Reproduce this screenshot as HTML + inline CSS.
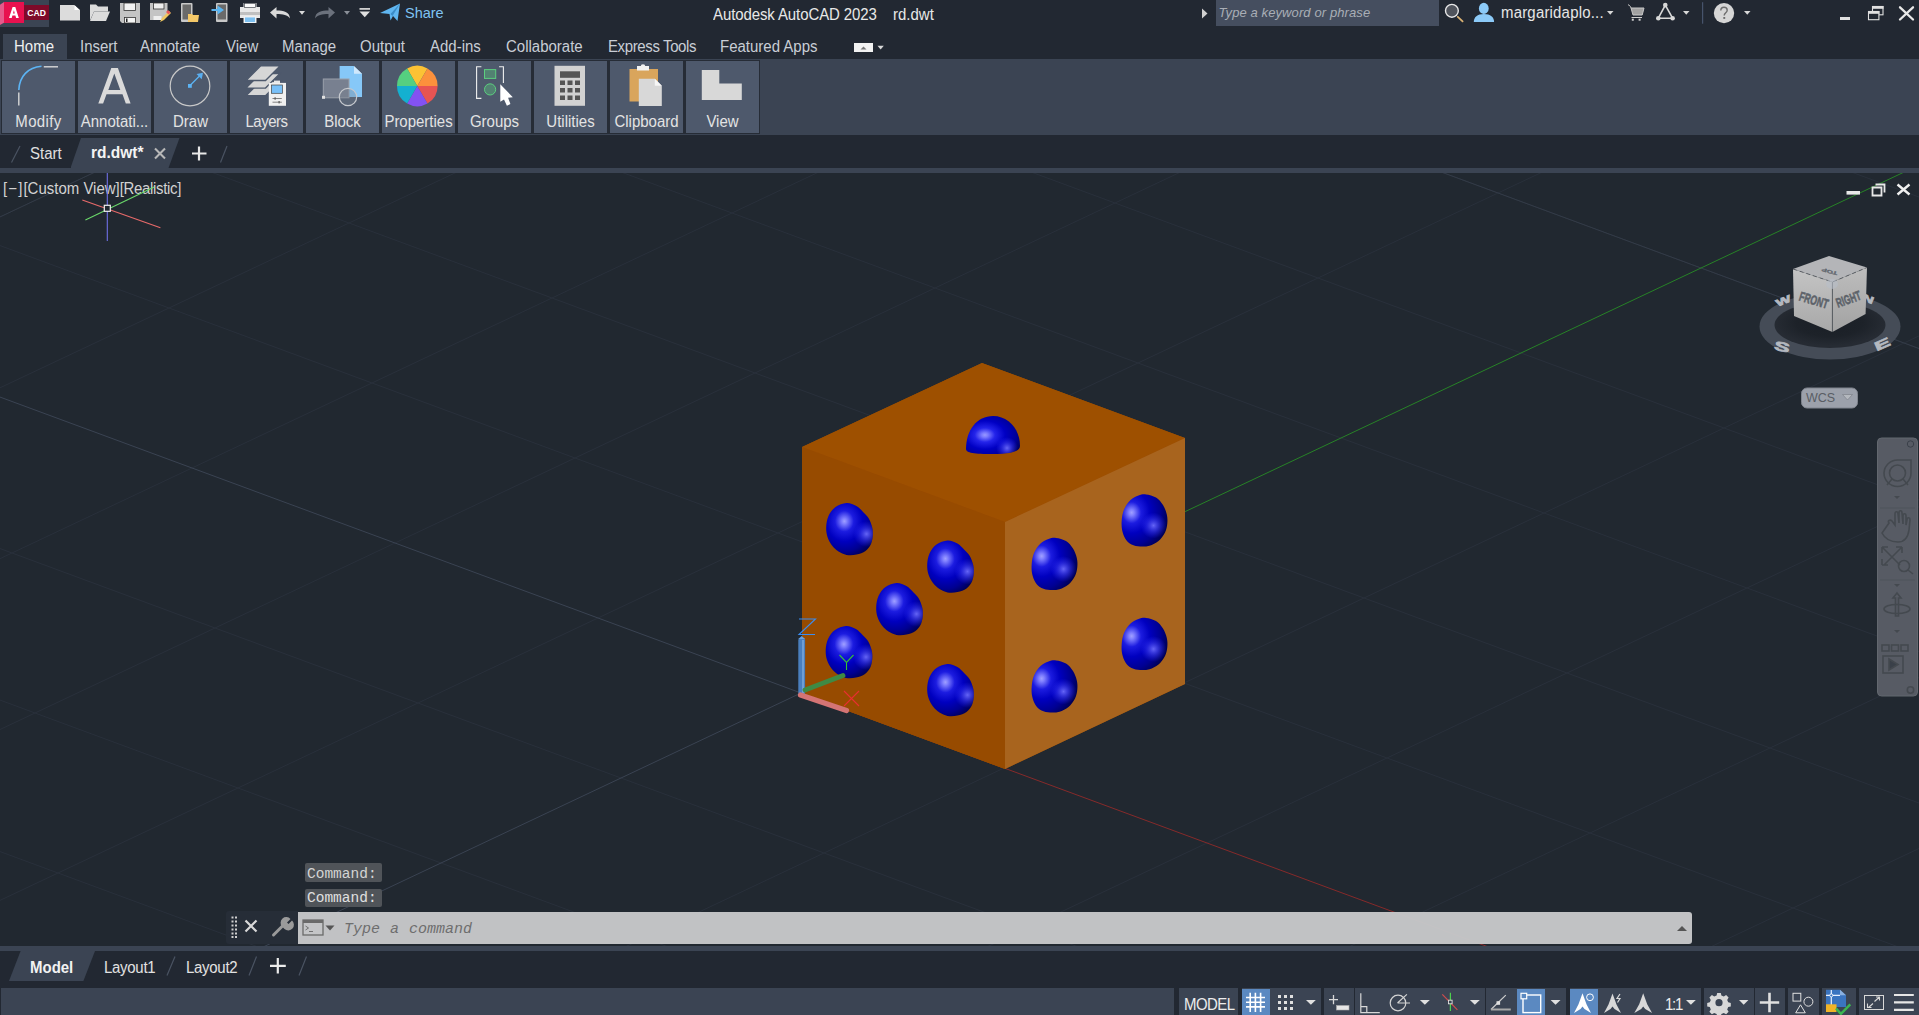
<!DOCTYPE html>
<html><head><meta charset="utf-8">
<style>
*{margin:0;padding:0;box-sizing:border-box}
html,body{width:1919px;height:1015px;overflow:hidden;background:#212830;font-family:"Liberation Sans",sans-serif;color:#e6e6e6}
.a{position:absolute}
.t{position:absolute;white-space:nowrap;line-height:1}
#title{left:0;top:0;width:1919px;height:30px;background:#222832}
#tabs{left:0;top:30px;width:1919px;height:29px;background:#222832}
#ribbon{left:0;top:59px;width:1919px;height:76px;background:#3b4453}
.rb{position:absolute;top:61px;width:73px;height:72px;background:#4e596c}
.rb .lb{position:absolute;left:0;width:73px;top:51.6px;text-align:center;font-size:16.05px;transform:scaleX(0.9346);color:#e3e3e3;line-height:1}
#ftabs{left:0;top:135px;width:1919px;height:33px;background:#222832}
#stripe1{left:0;top:168px;width:1919px;height:5px;background:#3b4453}
#vp{left:0;top:173px;width:1919px;height:773px;background:#212830;overflow:hidden}
#stripe2{left:0;top:946px;width:1919px;height:5px;background:#3b4453}
#ltabs{left:0;top:951px;width:1919px;height:37px;background:#222832}
#status{left:0;top:988px;width:1919px;height:27px;background:#222832}
</style></head><body>
<div id="title" class="a">
<!-- logo -->
<div class="a" style="left:0;top:0;width:49px;height:27px;background:#3b4453"></div>
<div class="a" style="left:0;top:2px;width:4px;height:23px;background:#e65a8c;clip-path:polygon(0 12%,100% 0,100% 90%,0 100%)"></div>
<div class="a" style="left:4px;top:2px;width:20px;height:21px;background:#e8114f"></div>
<div class="a" style="left:24px;top:5px;width:25px;height:15px;background:#7e0a29"></div>
<svg class="a" style="left:0;top:0" width="24" height="24"><path fill-rule="evenodd" d="M9 18.1L12.6 6.9H15.3L18.8 18.1H16.1L15.4 15.6H12.4L11.7 18.1ZM13 13.5H14.8L13.9 10.2Z" fill="#fff"/></svg>
<div class="t" style="left:27.3px;top:8.8px;font-size:8.6px;font-weight:bold;color:#fff;letter-spacing:0px">CAD</div>
<!-- QAT -->
<svg class="a" style="left:56px;top:0" width="350" height="28" viewBox="56 0 350 28">
<g fill="#dcdcdc">
<path d="M60 5h14l6 5v10.5H60z"/><path d="M74.5 5v5h5z" fill="#fff"/>
<path d="M90 4.5h6l2 2h10v5H94l-4 9z"/><path d="M94 11.5h16l-4 9.5H90z"/>
</g>
<path d="M120 3h20v20h-18l-2-2z" fill="#c4c4c4"/><rect x="124" y="3" width="11.5" height="7.5" fill="#f2f2f2" stroke="#333" stroke-width="0.8"/><rect x="124.5" y="17.5" width="11" height="5.5" fill="#f5f5f5" stroke="#333" stroke-width="0.8"/><rect x="126" y="18.5" width="1.5" height="3.5" fill="#222"/>
<path d="M150 3h17.5v12l-5 5H150z" fill="#c4c4c4"/><rect x="153.5" y="3" width="10.5" height="6" fill="#eee" stroke="#333" stroke-width="0.8"/><rect x="153.5" y="16" width="8" height="4" fill="#eee"/><path d="M160 22l2-4 7-7 2 2-7 7z" fill="#f0c860"/><path d="M166 12l2-2 2.5 2.5-2 2z" fill="#e85a5a"/>
<rect x="181" y="3" width="11.5" height="19" rx="1" fill="#c8c8c8"/><rect x="182.5" y="4.5" width="8.5" height="15" fill="#6a6a6a"/><path d="M188 14h4l1 1h6l-1 7h-10z" fill="#f4c868"/>
<rect x="216" y="3" width="11.5" height="19" rx="1" fill="#c8c8c8"/><rect x="217.5" y="4.5" width="8.5" height="15" fill="#6a6a6a"/><path d="M211.5 9h6v-3.5l6.5 4.5-6.5 4.5V11h-6z" fill="#5ab4f0"/>
<path d="M243.5 3h13v4h3.5v11h-3.5v5h-13v-5H240V7h3.5z" fill="#e8e8e8"/><rect x="244.5" y="3.5" width="11" height="3.8" fill="#fafafa" stroke="#2a2f38" stroke-width="0.6"/><rect x="240" y="12" width="20" height="3" fill="#c0c0c0"/><rect x="244.5" y="17" width="11" height="5.5" fill="#7ec0f0" stroke="#fafafa" stroke-width="0.8"/>
<path d="M270 12.5l6.5-5.5v3.5c7 0 13 1 13.5 8c-2.5-3.5-7-4.5-13.5-4.5V18.5z" fill="#d9d9d9"/>
<path d="M299 11h6l-3 3.8z" fill="#d9d9d9"/>
<path d="M335 12.5l-6.5-5.5v3.5c-7 0-13 1-13.5 8c2.5-3.5 7-4.5 13.5-4.5V18.5z" fill="#6b717c"/>
<path d="M344 11h6l-3 3.8z" fill="#8a8f98"/>
<rect x="359.5" y="8" width="10.5" height="1.8" fill="#d0d0d0"/><path d="M359.5 11.5h10.5l-5.25 5.8z" fill="#e0e0e0"/>
<path d="M380 13l20-9.5-2.5 17.5-4.5-5-2.5 4.5-1-6.5z" fill="#60b6f0"/><path d="M390.5 14l9.5-10.5-7.5 12.5z" fill="#3a8cc8"/>
</svg>
<div class="t" style="transform:scaleX(0.9343);transform-origin:0 0;left:405px;top:5.14px;font-size:15.52px;color:#7fc3f2">Share</div>
<div class="t" style="transform:scaleX(0.9346);transform-origin:0 0;left:713px;top:6.11px;font-size:16.05px;color:#e8e8e8;letter-spacing:-0.1px">Autodesk AutoCAD 2023</div>
<div class="t" style="transform:scaleX(0.9346);transform-origin:0 0;left:892.5px;top:6.11px;font-size:16.05px;color:#e8e8e8">rd.dwt</div>
<!-- right side -->
<svg class="a" style="left:1195px;top:0" width="724" height="28" viewBox="1195 0 724 28">
<path d="M1202 8.5l5.5 5-5.5 5z" fill="#d0d0d0"/>
<rect x="1216" y="0" width="223" height="26" fill="#454e5f"/>
<circle cx="1451.9" cy="10.8" r="6.4" fill="#50545c" stroke="#e8e8e8" stroke-width="1.4"/><path d="M1457.8 16.8l4.8 4.5" stroke="#dab274" stroke-width="1.8" stroke-linecap="round"/>
<ellipse cx="1483.8" cy="8.4" rx="4.9" ry="5.6" fill="#8ccaf8"/><path d="M1473.8 22c0-5 3.5-8.1 10.1-8.1s10.2 3.1 10.2 8.1z" fill="#8ccaf8"/>
<path d="M1607 11h6.5l-3.25 3.8z" fill="#d8d8d8"/>
<path d="M1628 4.7c1.5 0.5 2.5 1.5 3 3.3" fill="none" stroke="#c8c8c8" stroke-width="1"/>
<path d="M1631 8h13l-1.8 7h-9.2z" fill="#a2a2a2" stroke="#c8c8c8" stroke-width="1"/>
<path d="M1631.5 17.5h10.5" stroke="#d0d0d0" stroke-width="1"/><rect x="1631.8" y="18.7" width="2" height="2" fill="#d0d0d0"/><rect x="1638.6" y="18.7" width="2" height="2" fill="#d0d0d0"/>
<path d="M1665.3 5.1L1658.3 18.2H1672.6Z" fill="none" stroke="#d8d8d8" stroke-width="1.6" stroke-linejoin="round"/><circle cx="1665.3" cy="5.1" r="2.3" fill="#d8d8d8"/><circle cx="1658.3" cy="18.2" r="2.3" fill="#d8d8d8"/><circle cx="1672.6" cy="18.2" r="2.3" fill="#d8d8d8"/>
<path d="M1683 11h6.5l-3.25 3.8z" fill="#d8d8d8"/>
<rect x="1702" y="2.2" width="1.2" height="21.5" fill="#46536b"/>
<circle cx="1724" cy="13.1" r="10.2" fill="#d6d6d6"/><path d="M1720.8 10.5c0-2.2 1.4-3.2 3.2-3.2s3.2 1.1 3.2 2.9c0 2.5-3 2.6-3 5.3" fill="none" stroke="#6e6e6e" stroke-width="1.4"/><rect x="1723.3" y="17" width="1.9" height="1.9" fill="#6e6e6e"/>
<path d="M1744 11h6.5l-3.25 3.8z" fill="#d8d8d8"/>
<rect x="1840" y="17" width="10" height="3" fill="#e0e0e0"/>
<rect x="1872.5" y="6.5" width="10.5" height="8.3" fill="none" stroke="#e0e0e0" stroke-width="1.1"/><rect x="1872" y="6" width="11.5" height="2.8" fill="#e0e0e0"/><rect x="1868.5" y="11.5" width="10.4" height="8.2" fill="#222832" stroke="#e0e0e0" stroke-width="1.1"/><rect x="1868" y="11" width="11.4" height="2.8" fill="#e0e0e0"/>
<path d="M1900 7.3l13 12.2M1913 7.3l-13 12.2" stroke="#e8e8e8" stroke-width="2.3" stroke-linecap="round"/>
</svg>
<div class="t" style="left:1218.5px;top:5.5px;font-size:13px;font-style:italic;color:#a9aeb6;letter-spacing:0.1px">Type a keyword or phrase</div>
<div class="t" style="transform:scaleX(0.9346);transform-origin:0 0;left:1500.5px;top:4.11px;font-size:16.05px;color:#e6e6e6;letter-spacing:0.2px">margaridaplo...</div>
</div>
<div id="tabs" class="a">
<div class="a" style="left:3px;top:4px;width:64px;height:25px;background:#3b4453"></div>
<div class="t" style="transform:scaleX(0.9346);transform-origin:0 0;left:14px;top:8.11px;font-size:16.05px;color:#f0f0f0">Home</div>
<div class="t" style="transform:scaleX(0.9346);transform-origin:0 0;left:80px;top:8.11px;font-size:16.05px;color:#c9ced6">Insert</div>
<div class="t" style="transform:scaleX(0.9346);transform-origin:0 0;left:140px;top:8.11px;font-size:16.05px;color:#c9ced6">Annotate</div>
<div class="t" style="transform:scaleX(0.9346);transform-origin:0 0;left:225.5px;top:8.11px;font-size:16.05px;color:#c9ced6">View</div>
<div class="t" style="transform:scaleX(0.9346);transform-origin:0 0;left:282px;top:8.11px;font-size:16.05px;color:#c9ced6">Manage</div>
<div class="t" style="transform:scaleX(0.9346);transform-origin:0 0;left:359.5px;top:8.11px;font-size:16.05px;color:#c9ced6">Output</div>
<div class="t" style="transform:scaleX(0.9346);transform-origin:0 0;left:429.5px;top:8.11px;font-size:16.05px;color:#c9ced6">Add-ins</div>
<div class="t" style="transform:scaleX(0.9346);transform-origin:0 0;left:505.5px;top:8.11px;font-size:16.05px;color:#c9ced6">Collaborate</div>
<div class="t" style="transform:scaleX(0.9346);transform-origin:0 0;left:608px;top:8.11px;font-size:16.05px;color:#c9ced6;letter-spacing:-0.4px">Express Tools</div>
<div class="t" style="transform:scaleX(0.9346);transform-origin:0 0;left:720px;top:8.11px;font-size:16.05px;color:#c9ced6">Featured Apps</div>
<div class="a" style="left:854px;top:13px;width:19px;height:9px;background:#f2f2f2"></div>
<svg class="a" style="left:850px;top:10px" width="40" height="16" viewBox="850 40 40 16"><path d="M860.5 49.5l3-3 3 3z" fill="#777"/><path d="M877.5 45.8h6.3l-3.15 3.6z" fill="#d8d8d8"/></svg>
</div>
<div id="ribbon" class="a"></div>
<div class="a" style="left:1px;top:60px;width:759px;height:74px;background:#262c36"></div>
<div class="rb" style="left:2px"><div class="lb" style="letter-spacing:0.4px">Modify</div></div>
<div class="rb" style="left:78px"><div class="lb">Annotati...</div></div>
<div class="rb" style="left:154px"><div class="lb">Draw</div></div>
<div class="rb" style="left:230px"><div class="lb" style="letter-spacing:-0.5px">Layers</div></div>
<div class="rb" style="left:306px"><div class="lb">Block</div></div>
<div class="rb" style="left:382px"><div class="lb">Properties</div></div>
<div class="rb" style="left:458px"><div class="lb">Groups</div></div>
<div class="rb" style="left:534px"><div class="lb">Utilities</div></div>
<div class="rb" style="left:610px"><div class="lb">Clipboard</div></div>
<div class="rb" style="left:686px"><div class="lb">View</div></div>
<svg class="a" style="left:0;top:59px" width="760" height="76" viewBox="0 59 760 76">
<!-- Modify -->
<path d="M18.8 90C19.5 76 28 67.5 41.5 66.3" fill="none" stroke="#5cb4f4" stroke-width="1.6"/>
<path d="M43.8 66.8H58" stroke="#d8d8d8" stroke-width="1.4"/>
<path d="M18.8 92.5V105.5" stroke="#d8d8d8" stroke-width="1.4"/>
<!-- Annotation A -->
<path fill-rule="evenodd" d="M98.3 103.6L111.3 68.1H117.9L130.6 103.6H125.8L122.5 94.2H106.5L103.1 103.6ZM108.3 90H120.3L114.3 73.4Z" fill="#dadada"/>
<!-- Draw -->
<circle cx="190" cy="86" r="19.8" fill="none" stroke="#c8c8c8" stroke-width="1.2"/>
<rect x="188" y="84" width="3.8" height="3.8" fill="#5cb4f4"/>
<path d="M190 85.5L201 74.5" stroke="#5cb4f4" stroke-width="1.2"/><path d="M203 72.8l-6.5 1.2 5.2 5.2z" fill="#5aaef0"/>
<!-- Layers -->
<path d="M260.5 81.2h19.5l-14.5 14.6H246z" fill="#d6d6d6" stroke="#4e596c" stroke-width="1.4"/>
<path d="M260.5 73.5h19.5l-14.5 14.6H246z" fill="#d6d6d6" stroke="#4e596c" stroke-width="1.4"/>
<path d="M260.5 65.9h19.5l-14.5 14.6H246z" fill="#d6d6d6" stroke="#4e596c" stroke-width="1.4"/>
<rect x="274" y="80.6" width="6" height="3" fill="#e8e8e8"/>
<rect x="268.8" y="82.9" width="17.2" height="22.9" fill="#f0f0f0"/><rect x="271.4" y="85" width="11" height="8.3" fill="#79c0f8" stroke="#444" stroke-width="0.7"/><path d="M272.5 98.5h9.3M272.5 102.2h9.3" stroke="#666" stroke-width="0.8"/><rect x="274.5" y="97.3" width="1.2" height="2.4" fill="#555"/><rect x="278.5" y="101" width="1.2" height="2.4" fill="#555"/>
<!-- Block -->
<path d="M339.6 66h14l8.4 7.8V97h-22.4z" fill="#86c8f8"/><path d="M354 66v7.8h8z" fill="#cfe8fc"/>
<rect x="323.3" y="79" width="25.7" height="18.8" fill="#788090" stroke="#9aa0aa" stroke-width="1"/>
<circle cx="348" cy="97" r="8.7" fill="#788090" fill-opacity="0.35" stroke="#c6c9ce" stroke-width="1.2"/>
<path d="M340 79v18.8" stroke="none"/>
<rect x="322" y="95.8" width="3" height="3" fill="#e0e0e0"/>
<!-- Properties -->
<g transform="translate(417.3 86)">
<path d="M0 0L-10.15 -17.58A20.3 20.3 0 0 1 10.15 -17.58z" fill="#fcc234"/>
<path d="M0 0L10.15 -17.58A20.3 20.3 0 0 1 20.3 0z" fill="#fc913c"/>
<path d="M0 0L20.3 0A20.3 20.3 0 0 1 10.15 17.58z" fill="#e75453"/>
<path d="M0 0L10.15 17.58A20.3 20.3 0 0 1 -10.15 17.58z" fill="#8352f2"/>
<path d="M0 0L-10.15 17.58A20.3 20.3 0 0 1 -20.3 0z" fill="#14b0d0"/>
<path d="M0 0L-20.3 0A20.3 20.3 0 0 1 -10.15 -17.58z" fill="#55cf80"/>
</g>
<!-- Groups -->
<path d="M481.4 66.8h-4.8v31.6h4.8M499.1 66.8h4.3v16.2" fill="none" stroke="#f0f0f0" stroke-width="1.1"/>
<rect x="484.5" y="69.6" width="11.2" height="8.8" fill="#528272" stroke="#5ccf7f" stroke-width="1"/>
<circle cx="490.1" cy="89.4" r="5.6" fill="#528272" stroke="#5ccf7f" stroke-width="1"/>
<path d="M500.3 84.2V101.7L504 99.4L506.9 105.8L510.4 104.1L508.1 97.7L512.8 97.2Z" fill="#fff"/>
<!-- Utilities -->
<rect x="554.5" y="65.8" width="30.5" height="40" fill="#d2d2d2"/>
<rect x="560" y="71.3" width="20" height="6.5" fill="#555"/>
<g fill="#555"><rect x="560" y="80.5" width="5" height="4.5"/><rect x="567.5" y="80.5" width="5" height="4.5"/><rect x="575" y="80.5" width="5" height="4.5"/><rect x="560" y="88" width="5" height="4.5"/><rect x="567.5" y="88" width="5" height="4.5"/><rect x="575" y="88" width="5" height="4.5"/><rect x="560" y="95.5" width="5" height="4.5"/><rect x="567.5" y="95.5" width="5" height="4.5"/><rect x="575" y="95.5" width="5" height="4.5"/></g>
<!-- Clipboard -->
<rect x="629.5" y="69" width="28.5" height="32.5" fill="#d9a55c"/>
<path d="M637 66h12v4.5h-12z" fill="#f2f2f2"/><circle cx="643" cy="66.5" r="2.3" fill="#f2f2f2"/>
<path d="M638.8 78.8h16l7 7V106h-23z" fill="#d8d8d8"/><path d="M654.8 78.8v7h7z" fill="#f6f6f6"/>
<!-- View -->
<path d="M701.8 70h17.5v13.5h22.5V100h-40z" fill="#d8d8d8"/>
</svg>
<div id="ftabs" class="a">
<div class="a" style="left:70.5px;top:3px;width:109px;height:30px;background:#3b4453;clip-path:polygon(9.6% 0,100% 0,89.9% 100%,0 100%)"></div>
<svg class="a" style="left:0;top:0" width="240" height="33" viewBox="0 135 240 33">
<path d="M11.5 162.5L20 146" stroke="#4a5362" stroke-width="1.2"/>
<path d="M155 148.5l10 10M165 148.5l-10 10" stroke="#b8b8b8" stroke-width="2.1"/>
<path d="M199 146.5v14M192 153.5h14.5" stroke="#e8e8e8" stroke-width="2.2"/>
<path d="M220.5 162.5L227 146" stroke="#4a5362" stroke-width="1.2"/>
</svg>
<div class="t" style="transform:scaleX(0.9346);transform-origin:0 0;left:30px;top:10.11px;font-size:16.05px;color:#e0e0e0">Start</div>
<div class="t" style="transform:scaleX(0.9343);transform-origin:0 0;left:91px;top:10.08px;font-size:16.59px;font-weight:bold;color:#f4f4f4">rd.dwt*</div>
</div>
<div id="stripe1" class="a"></div>
<div id="vp" class="a"></div>
<svg class="a" style="left:0;top:173px" width="1919" height="773" viewBox="0 173 1919 773">
<defs>
<radialGradient id="sg1" cx="0.5" cy="0.5" r="0.55" fx="0.33" fy="0.33">
<stop offset="0" stop-color="#9a9cff"/><stop offset="0.12" stop-color="#6a6cff"/><stop offset="0.38" stop-color="#0a0ad8"/><stop offset="0.75" stop-color="#0000b0"/><stop offset="1" stop-color="#00006a"/>
</radialGradient>
<radialGradient id="hl2" cx="0.5" cy="0.5" r="0.5">
<stop offset="0" stop-color="#7c7cff" stop-opacity="0.85"/><stop offset="1" stop-color="#4040ff" stop-opacity="0"/>
</radialGradient>
<radialGradient id="gL" gradientUnits="objectBoundingBox" cx="0.39" cy="0.35" r="0.74"><stop offset="0" stop-color="#a0a0ff"/><stop offset="0.07" stop-color="#8080ff"/><stop offset="0.27" stop-color="#1c1ce0"/><stop offset="0.52" stop-color="#0000c0"/><stop offset="0.78" stop-color="#000092"/><stop offset="1" stop-color="#00004e"/></radialGradient>
<radialGradient id="gR" gradientUnits="objectBoundingBox" cx="0.22" cy="0.35" r="0.82"><stop offset="0" stop-color="#a0a0ff"/><stop offset="0.07" stop-color="#8080ff"/><stop offset="0.25" stop-color="#1c1ce0"/><stop offset="0.48" stop-color="#0000c0"/><stop offset="0.76" stop-color="#000092"/><stop offset="1" stop-color="#00004e"/></radialGradient>
<radialGradient id="gT" gradientUnits="objectBoundingBox" cx="0.35" cy="0.5" r="0.72"><stop offset="0" stop-color="#9898ff"/><stop offset="0.08" stop-color="#7b7bff"/><stop offset="0.26" stop-color="#2424ea"/><stop offset="0.52" stop-color="#0000c4"/><stop offset="0.8" stop-color="#00009a"/><stop offset="1" stop-color="#000060"/></radialGradient>
<radialGradient id="gH"><stop offset="0" stop-color="#7070ff" stop-opacity="0.9"/><stop offset="0.5" stop-color="#4a4aff" stop-opacity="0.45"/><stop offset="1" stop-color="#3030ff" stop-opacity="0"/></radialGradient>
</defs>
<path d="M-3841 493L1843 2593M-3661 408L2023 2508M-3481 323L2203 2423M-3301 238L2383 2338M-3121 153L2563 2253M-2941 68L2743 2168M-2761 -17L2923 2083M-2581 -102L3103 1998M-2401 -187L3283 1913M-2221 -272L3463 1828M-1861 -442L3823 1658M-1681 -527L4003 1573M-1501 -612L4183 1488M-1321 -697L4363 1403M-1141 -782L4543 1318M-961 -867L4723 1233M-781 -952L4903 1148M-601 -1037L5083 1063M-421 -1122L5263 978M-241 -1207L5443 893M-61 -1292L5623 808M-3749 1133L1291 -1247M-3546 1208L1494 -1172M-3343 1283L1697 -1097M-3140 1358L1900 -1022M-2937 1433L2103 -947M-2734 1508L2306 -872M-2531 1583L2509 -797M-2328 1658L2712 -722M-2125 1733L2915 -647M-1922 1808L3118 -572M-1516 1958L3524 -422M-1313 2033L3727 -347M-1110 2108L3930 -272M-907 2183L4133 -197M-704 2258L4336 -122M-501 2333L4539 -47M-298 2408L4742 28M-95 2483L4945 103M108 2558L5148 178M311 2633L5351 253M514 2708L5554 328" stroke="#29303b" stroke-width="1" fill="none"/>
<path d="M-1141 -782L4543 1318M-2941 68L2743 2168M-241 -1207L5443 893M-3841 493L1843 2593M-704 2258L4336 -122M-2734 1508L2306 -872M311 2633L5351 253M-3749 1133L1291 -1247" stroke="#333b47" stroke-width="1" fill="none"/>
<path d="M801 693L-2041 -357M801 693L-1719 1883" stroke="#3a4352" stroke-width="1" fill="none"/>
<path d="M801 693L3643 1743" stroke="#862a2a" stroke-width="1" fill="none"/>
<path d="M801 693L3321 -497" stroke="#278227" stroke-width="1" fill="none"/>
<polygon points="982,363 1185,438 1185,684 1005,769 802,694 802,447" fill="#9b4e00"/><polygon points="982,363 1185,438 1005,522 802,447" fill="#9e5000"/>
<polygon points="802,447 1005,522 1005,769 802,694" fill="#974b00"/>
<polygon points="1005,522 1185,438 1185,684 1005,769" fill="#a8641e"/>
<g transform="translate(849.5 529)"><clipPath id="c1"><path d="M-3.00 -26.10C0.48 -26.27 4.10 -24.55 6.90 -23.00C9.70 -21.45 11.73 -18.87 13.80 -16.80C15.87 -14.73 17.83 -13.07 19.30 -10.60C20.77 -8.13 21.93 -4.77 22.60 -2.00C23.27 0.77 23.48 3.17 23.30 6.00C23.12 8.83 22.72 12.33 21.50 15.00C20.28 17.67 18.42 20.23 16.00 22.00C13.58 23.77 10.17 24.95 7.00 25.60C3.83 26.25 0.00 26.42 -3.00 25.90C-6.00 25.38 -8.58 24.07 -11.00 22.50C-13.42 20.93 -15.67 18.92 -17.50 16.50C-19.33 14.08 -21.03 11.08 -22.00 8.00C-22.97 4.92 -23.47 1.50 -23.30 -2.00C-23.13 -5.50 -22.55 -9.67 -21.00 -13.00C-19.45 -16.33 -17.00 -19.82 -14.00 -22.00C-11.00 -24.18 -6.48 -25.93 -3.00 -26.10Z"/></clipPath><path d="M-3.00 -26.10C0.48 -26.27 4.10 -24.55 6.90 -23.00C9.70 -21.45 11.73 -18.87 13.80 -16.80C15.87 -14.73 17.83 -13.07 19.30 -10.60C20.77 -8.13 21.93 -4.77 22.60 -2.00C23.27 0.77 23.48 3.17 23.30 6.00C23.12 8.83 22.72 12.33 21.50 15.00C20.28 17.67 18.42 20.23 16.00 22.00C13.58 23.77 10.17 24.95 7.00 25.60C3.83 26.25 0.00 26.42 -3.00 25.90C-6.00 25.38 -8.58 24.07 -11.00 22.50C-13.42 20.93 -15.67 18.92 -17.50 16.50C-19.33 14.08 -21.03 11.08 -22.00 8.00C-22.97 4.92 -23.47 1.50 -23.30 -2.00C-23.13 -5.50 -22.55 -9.67 -21.00 -13.00C-19.45 -16.33 -17.00 -19.82 -14.00 -22.00C-11.00 -24.18 -6.48 -25.93 -3.00 -26.10Z" fill="url(#gL)"/><circle cx="17" cy="5" r="13" fill="url(#gH)" clip-path="url(#c1)"/></g><g transform="translate(950.5 566.5)"><clipPath id="c2"><path d="M-3.00 -26.10C0.48 -26.27 4.10 -24.55 6.90 -23.00C9.70 -21.45 11.73 -18.87 13.80 -16.80C15.87 -14.73 17.83 -13.07 19.30 -10.60C20.77 -8.13 21.93 -4.77 22.60 -2.00C23.27 0.77 23.48 3.17 23.30 6.00C23.12 8.83 22.72 12.33 21.50 15.00C20.28 17.67 18.42 20.23 16.00 22.00C13.58 23.77 10.17 24.95 7.00 25.60C3.83 26.25 0.00 26.42 -3.00 25.90C-6.00 25.38 -8.58 24.07 -11.00 22.50C-13.42 20.93 -15.67 18.92 -17.50 16.50C-19.33 14.08 -21.03 11.08 -22.00 8.00C-22.97 4.92 -23.47 1.50 -23.30 -2.00C-23.13 -5.50 -22.55 -9.67 -21.00 -13.00C-19.45 -16.33 -17.00 -19.82 -14.00 -22.00C-11.00 -24.18 -6.48 -25.93 -3.00 -26.10Z"/></clipPath><path d="M-3.00 -26.10C0.48 -26.27 4.10 -24.55 6.90 -23.00C9.70 -21.45 11.73 -18.87 13.80 -16.80C15.87 -14.73 17.83 -13.07 19.30 -10.60C20.77 -8.13 21.93 -4.77 22.60 -2.00C23.27 0.77 23.48 3.17 23.30 6.00C23.12 8.83 22.72 12.33 21.50 15.00C20.28 17.67 18.42 20.23 16.00 22.00C13.58 23.77 10.17 24.95 7.00 25.60C3.83 26.25 0.00 26.42 -3.00 25.90C-6.00 25.38 -8.58 24.07 -11.00 22.50C-13.42 20.93 -15.67 18.92 -17.50 16.50C-19.33 14.08 -21.03 11.08 -22.00 8.00C-22.97 4.92 -23.47 1.50 -23.30 -2.00C-23.13 -5.50 -22.55 -9.67 -21.00 -13.00C-19.45 -16.33 -17.00 -19.82 -14.00 -22.00C-11.00 -24.18 -6.48 -25.93 -3.00 -26.10Z" fill="url(#gL)"/><circle cx="17" cy="5" r="13" fill="url(#gH)" clip-path="url(#c2)"/></g><g transform="translate(899.5 609)"><clipPath id="c3"><path d="M-3.00 -26.10C0.48 -26.27 4.10 -24.55 6.90 -23.00C9.70 -21.45 11.73 -18.87 13.80 -16.80C15.87 -14.73 17.83 -13.07 19.30 -10.60C20.77 -8.13 21.93 -4.77 22.60 -2.00C23.27 0.77 23.48 3.17 23.30 6.00C23.12 8.83 22.72 12.33 21.50 15.00C20.28 17.67 18.42 20.23 16.00 22.00C13.58 23.77 10.17 24.95 7.00 25.60C3.83 26.25 0.00 26.42 -3.00 25.90C-6.00 25.38 -8.58 24.07 -11.00 22.50C-13.42 20.93 -15.67 18.92 -17.50 16.50C-19.33 14.08 -21.03 11.08 -22.00 8.00C-22.97 4.92 -23.47 1.50 -23.30 -2.00C-23.13 -5.50 -22.55 -9.67 -21.00 -13.00C-19.45 -16.33 -17.00 -19.82 -14.00 -22.00C-11.00 -24.18 -6.48 -25.93 -3.00 -26.10Z"/></clipPath><path d="M-3.00 -26.10C0.48 -26.27 4.10 -24.55 6.90 -23.00C9.70 -21.45 11.73 -18.87 13.80 -16.80C15.87 -14.73 17.83 -13.07 19.30 -10.60C20.77 -8.13 21.93 -4.77 22.60 -2.00C23.27 0.77 23.48 3.17 23.30 6.00C23.12 8.83 22.72 12.33 21.50 15.00C20.28 17.67 18.42 20.23 16.00 22.00C13.58 23.77 10.17 24.95 7.00 25.60C3.83 26.25 0.00 26.42 -3.00 25.90C-6.00 25.38 -8.58 24.07 -11.00 22.50C-13.42 20.93 -15.67 18.92 -17.50 16.50C-19.33 14.08 -21.03 11.08 -22.00 8.00C-22.97 4.92 -23.47 1.50 -23.30 -2.00C-23.13 -5.50 -22.55 -9.67 -21.00 -13.00C-19.45 -16.33 -17.00 -19.82 -14.00 -22.00C-11.00 -24.18 -6.48 -25.93 -3.00 -26.10Z" fill="url(#gL)"/><circle cx="17" cy="5" r="13" fill="url(#gH)" clip-path="url(#c3)"/></g><g transform="translate(849 652)"><clipPath id="c4"><path d="M-3.00 -26.10C0.48 -26.27 4.10 -24.55 6.90 -23.00C9.70 -21.45 11.73 -18.87 13.80 -16.80C15.87 -14.73 17.83 -13.07 19.30 -10.60C20.77 -8.13 21.93 -4.77 22.60 -2.00C23.27 0.77 23.48 3.17 23.30 6.00C23.12 8.83 22.72 12.33 21.50 15.00C20.28 17.67 18.42 20.23 16.00 22.00C13.58 23.77 10.17 24.95 7.00 25.60C3.83 26.25 0.00 26.42 -3.00 25.90C-6.00 25.38 -8.58 24.07 -11.00 22.50C-13.42 20.93 -15.67 18.92 -17.50 16.50C-19.33 14.08 -21.03 11.08 -22.00 8.00C-22.97 4.92 -23.47 1.50 -23.30 -2.00C-23.13 -5.50 -22.55 -9.67 -21.00 -13.00C-19.45 -16.33 -17.00 -19.82 -14.00 -22.00C-11.00 -24.18 -6.48 -25.93 -3.00 -26.10Z"/></clipPath><path d="M-3.00 -26.10C0.48 -26.27 4.10 -24.55 6.90 -23.00C9.70 -21.45 11.73 -18.87 13.80 -16.80C15.87 -14.73 17.83 -13.07 19.30 -10.60C20.77 -8.13 21.93 -4.77 22.60 -2.00C23.27 0.77 23.48 3.17 23.30 6.00C23.12 8.83 22.72 12.33 21.50 15.00C20.28 17.67 18.42 20.23 16.00 22.00C13.58 23.77 10.17 24.95 7.00 25.60C3.83 26.25 0.00 26.42 -3.00 25.90C-6.00 25.38 -8.58 24.07 -11.00 22.50C-13.42 20.93 -15.67 18.92 -17.50 16.50C-19.33 14.08 -21.03 11.08 -22.00 8.00C-22.97 4.92 -23.47 1.50 -23.30 -2.00C-23.13 -5.50 -22.55 -9.67 -21.00 -13.00C-19.45 -16.33 -17.00 -19.82 -14.00 -22.00C-11.00 -24.18 -6.48 -25.93 -3.00 -26.10Z" fill="url(#gL)"/><circle cx="17" cy="5" r="13" fill="url(#gH)" clip-path="url(#c4)"/></g><g transform="translate(950.5 690)"><clipPath id="c5"><path d="M-3.00 -26.10C0.48 -26.27 4.10 -24.55 6.90 -23.00C9.70 -21.45 11.73 -18.87 13.80 -16.80C15.87 -14.73 17.83 -13.07 19.30 -10.60C20.77 -8.13 21.93 -4.77 22.60 -2.00C23.27 0.77 23.48 3.17 23.30 6.00C23.12 8.83 22.72 12.33 21.50 15.00C20.28 17.67 18.42 20.23 16.00 22.00C13.58 23.77 10.17 24.95 7.00 25.60C3.83 26.25 0.00 26.42 -3.00 25.90C-6.00 25.38 -8.58 24.07 -11.00 22.50C-13.42 20.93 -15.67 18.92 -17.50 16.50C-19.33 14.08 -21.03 11.08 -22.00 8.00C-22.97 4.92 -23.47 1.50 -23.30 -2.00C-23.13 -5.50 -22.55 -9.67 -21.00 -13.00C-19.45 -16.33 -17.00 -19.82 -14.00 -22.00C-11.00 -24.18 -6.48 -25.93 -3.00 -26.10Z"/></clipPath><path d="M-3.00 -26.10C0.48 -26.27 4.10 -24.55 6.90 -23.00C9.70 -21.45 11.73 -18.87 13.80 -16.80C15.87 -14.73 17.83 -13.07 19.30 -10.60C20.77 -8.13 21.93 -4.77 22.60 -2.00C23.27 0.77 23.48 3.17 23.30 6.00C23.12 8.83 22.72 12.33 21.50 15.00C20.28 17.67 18.42 20.23 16.00 22.00C13.58 23.77 10.17 24.95 7.00 25.60C3.83 26.25 0.00 26.42 -3.00 25.90C-6.00 25.38 -8.58 24.07 -11.00 22.50C-13.42 20.93 -15.67 18.92 -17.50 16.50C-19.33 14.08 -21.03 11.08 -22.00 8.00C-22.97 4.92 -23.47 1.50 -23.30 -2.00C-23.13 -5.50 -22.55 -9.67 -21.00 -13.00C-19.45 -16.33 -17.00 -19.82 -14.00 -22.00C-11.00 -24.18 -6.48 -25.93 -3.00 -26.10Z" fill="url(#gL)"/><circle cx="17" cy="5" r="13" fill="url(#gH)" clip-path="url(#c5)"/></g><g transform="translate(1054.5 564)"><clipPath id="c6"><path d="M1.50 -26.10C4.42 -25.77 8.67 -24.77 11.50 -23.00C14.33 -21.23 16.70 -18.33 18.50 -15.50C20.30 -12.67 21.58 -9.08 22.30 -6.00C23.02 -2.92 23.10 0.00 22.80 3.00C22.50 6.00 21.97 9.08 20.50 12.00C19.03 14.92 16.58 18.30 14.00 20.50C11.42 22.70 8.05 24.28 5.00 25.20C1.95 26.12 -1.30 26.20 -4.30 26.00C-7.30 25.80 -10.55 25.25 -13.00 24.00C-15.45 22.75 -17.45 20.83 -19.00 18.50C-20.55 16.17 -21.67 13.08 -22.30 10.00C-22.93 6.92 -23.10 3.50 -22.80 0.00C-22.50 -3.50 -21.97 -7.58 -20.50 -11.00C-19.03 -14.42 -16.42 -18.17 -14.00 -20.50C-11.58 -22.83 -8.58 -24.07 -6.00 -25.00C-3.42 -25.93 -1.42 -26.43 1.50 -26.10Z"/></clipPath><path d="M1.50 -26.10C4.42 -25.77 8.67 -24.77 11.50 -23.00C14.33 -21.23 16.70 -18.33 18.50 -15.50C20.30 -12.67 21.58 -9.08 22.30 -6.00C23.02 -2.92 23.10 0.00 22.80 3.00C22.50 6.00 21.97 9.08 20.50 12.00C19.03 14.92 16.58 18.30 14.00 20.50C11.42 22.70 8.05 24.28 5.00 25.20C1.95 26.12 -1.30 26.20 -4.30 26.00C-7.30 25.80 -10.55 25.25 -13.00 24.00C-15.45 22.75 -17.45 20.83 -19.00 18.50C-20.55 16.17 -21.67 13.08 -22.30 10.00C-22.93 6.92 -23.10 3.50 -22.80 0.00C-22.50 -3.50 -21.97 -7.58 -20.50 -11.00C-19.03 -14.42 -16.42 -18.17 -14.00 -20.50C-11.58 -22.83 -8.58 -24.07 -6.00 -25.00C-3.42 -25.93 -1.42 -26.43 1.50 -26.10Z" fill="url(#gR)"/><circle cx="9" cy="5" r="13" fill="url(#gH)" clip-path="url(#c6)"/></g><g transform="translate(1144.5 520.5)"><clipPath id="c7"><path d="M1.50 -26.10C4.42 -25.77 8.67 -24.77 11.50 -23.00C14.33 -21.23 16.70 -18.33 18.50 -15.50C20.30 -12.67 21.58 -9.08 22.30 -6.00C23.02 -2.92 23.10 0.00 22.80 3.00C22.50 6.00 21.97 9.08 20.50 12.00C19.03 14.92 16.58 18.30 14.00 20.50C11.42 22.70 8.05 24.28 5.00 25.20C1.95 26.12 -1.30 26.20 -4.30 26.00C-7.30 25.80 -10.55 25.25 -13.00 24.00C-15.45 22.75 -17.45 20.83 -19.00 18.50C-20.55 16.17 -21.67 13.08 -22.30 10.00C-22.93 6.92 -23.10 3.50 -22.80 0.00C-22.50 -3.50 -21.97 -7.58 -20.50 -11.00C-19.03 -14.42 -16.42 -18.17 -14.00 -20.50C-11.58 -22.83 -8.58 -24.07 -6.00 -25.00C-3.42 -25.93 -1.42 -26.43 1.50 -26.10Z"/></clipPath><path d="M1.50 -26.10C4.42 -25.77 8.67 -24.77 11.50 -23.00C14.33 -21.23 16.70 -18.33 18.50 -15.50C20.30 -12.67 21.58 -9.08 22.30 -6.00C23.02 -2.92 23.10 0.00 22.80 3.00C22.50 6.00 21.97 9.08 20.50 12.00C19.03 14.92 16.58 18.30 14.00 20.50C11.42 22.70 8.05 24.28 5.00 25.20C1.95 26.12 -1.30 26.20 -4.30 26.00C-7.30 25.80 -10.55 25.25 -13.00 24.00C-15.45 22.75 -17.45 20.83 -19.00 18.50C-20.55 16.17 -21.67 13.08 -22.30 10.00C-22.93 6.92 -23.10 3.50 -22.80 0.00C-22.50 -3.50 -21.97 -7.58 -20.50 -11.00C-19.03 -14.42 -16.42 -18.17 -14.00 -20.50C-11.58 -22.83 -8.58 -24.07 -6.00 -25.00C-3.42 -25.93 -1.42 -26.43 1.50 -26.10Z" fill="url(#gR)"/><circle cx="9" cy="5" r="13" fill="url(#gH)" clip-path="url(#c7)"/></g><g transform="translate(1054.5 686.5)"><clipPath id="c8"><path d="M1.50 -26.10C4.42 -25.77 8.67 -24.77 11.50 -23.00C14.33 -21.23 16.70 -18.33 18.50 -15.50C20.30 -12.67 21.58 -9.08 22.30 -6.00C23.02 -2.92 23.10 0.00 22.80 3.00C22.50 6.00 21.97 9.08 20.50 12.00C19.03 14.92 16.58 18.30 14.00 20.50C11.42 22.70 8.05 24.28 5.00 25.20C1.95 26.12 -1.30 26.20 -4.30 26.00C-7.30 25.80 -10.55 25.25 -13.00 24.00C-15.45 22.75 -17.45 20.83 -19.00 18.50C-20.55 16.17 -21.67 13.08 -22.30 10.00C-22.93 6.92 -23.10 3.50 -22.80 0.00C-22.50 -3.50 -21.97 -7.58 -20.50 -11.00C-19.03 -14.42 -16.42 -18.17 -14.00 -20.50C-11.58 -22.83 -8.58 -24.07 -6.00 -25.00C-3.42 -25.93 -1.42 -26.43 1.50 -26.10Z"/></clipPath><path d="M1.50 -26.10C4.42 -25.77 8.67 -24.77 11.50 -23.00C14.33 -21.23 16.70 -18.33 18.50 -15.50C20.30 -12.67 21.58 -9.08 22.30 -6.00C23.02 -2.92 23.10 0.00 22.80 3.00C22.50 6.00 21.97 9.08 20.50 12.00C19.03 14.92 16.58 18.30 14.00 20.50C11.42 22.70 8.05 24.28 5.00 25.20C1.95 26.12 -1.30 26.20 -4.30 26.00C-7.30 25.80 -10.55 25.25 -13.00 24.00C-15.45 22.75 -17.45 20.83 -19.00 18.50C-20.55 16.17 -21.67 13.08 -22.30 10.00C-22.93 6.92 -23.10 3.50 -22.80 0.00C-22.50 -3.50 -21.97 -7.58 -20.50 -11.00C-19.03 -14.42 -16.42 -18.17 -14.00 -20.50C-11.58 -22.83 -8.58 -24.07 -6.00 -25.00C-3.42 -25.93 -1.42 -26.43 1.50 -26.10Z" fill="url(#gR)"/><circle cx="9" cy="5" r="13" fill="url(#gH)" clip-path="url(#c8)"/></g><g transform="translate(1144.5 644)"><clipPath id="c9"><path d="M1.50 -26.10C4.42 -25.77 8.67 -24.77 11.50 -23.00C14.33 -21.23 16.70 -18.33 18.50 -15.50C20.30 -12.67 21.58 -9.08 22.30 -6.00C23.02 -2.92 23.10 0.00 22.80 3.00C22.50 6.00 21.97 9.08 20.50 12.00C19.03 14.92 16.58 18.30 14.00 20.50C11.42 22.70 8.05 24.28 5.00 25.20C1.95 26.12 -1.30 26.20 -4.30 26.00C-7.30 25.80 -10.55 25.25 -13.00 24.00C-15.45 22.75 -17.45 20.83 -19.00 18.50C-20.55 16.17 -21.67 13.08 -22.30 10.00C-22.93 6.92 -23.10 3.50 -22.80 0.00C-22.50 -3.50 -21.97 -7.58 -20.50 -11.00C-19.03 -14.42 -16.42 -18.17 -14.00 -20.50C-11.58 -22.83 -8.58 -24.07 -6.00 -25.00C-3.42 -25.93 -1.42 -26.43 1.50 -26.10Z"/></clipPath><path d="M1.50 -26.10C4.42 -25.77 8.67 -24.77 11.50 -23.00C14.33 -21.23 16.70 -18.33 18.50 -15.50C20.30 -12.67 21.58 -9.08 22.30 -6.00C23.02 -2.92 23.10 0.00 22.80 3.00C22.50 6.00 21.97 9.08 20.50 12.00C19.03 14.92 16.58 18.30 14.00 20.50C11.42 22.70 8.05 24.28 5.00 25.20C1.95 26.12 -1.30 26.20 -4.30 26.00C-7.30 25.80 -10.55 25.25 -13.00 24.00C-15.45 22.75 -17.45 20.83 -19.00 18.50C-20.55 16.17 -21.67 13.08 -22.30 10.00C-22.93 6.92 -23.10 3.50 -22.80 0.00C-22.50 -3.50 -21.97 -7.58 -20.50 -11.00C-19.03 -14.42 -16.42 -18.17 -14.00 -20.50C-11.58 -22.83 -8.58 -24.07 -6.00 -25.00C-3.42 -25.93 -1.42 -26.43 1.50 -26.10Z" fill="url(#gR)"/><circle cx="9" cy="5" r="13" fill="url(#gH)" clip-path="url(#c9)"/></g><clipPath id="c10"><path d="M966 449 C966 430 977 416 993 416 C1009 416 1020 430 1020 446 C1020 451 1012 454 993 454 C974 454 966 453 966 449Z"/></clipPath><path d="M966 449 C966 430 977 416 993 416 C1009 416 1020 430 1020 446 C1020 451 1012 454 993 454 C974 454 966 453 966 449Z" fill="url(#gT)"/><circle cx="1007" cy="448" r="11" fill="url(#gH)" clip-path="url(#c10)"/>
</svg>
<!-- viewport overlays -->
<div class="t" style="transform:scaleX(0.9346);transform-origin:0 0;left:2.5px;top:180.11px;font-size:16.05px;color:#d2d2d2"><span style="letter-spacing:1.2px">[−]</span>[Custom View]<span style="letter-spacing:-0.35px">[Realistic]</span></div>
<svg class="a" style="left:0;top:173px" width="1919" height="773" viewBox="0 173 1919 773">
<path d="M107.3 173V241" stroke="#6f6fe8" stroke-width="1.1"/>
<path d="M82.3 200L160.4 227.7" stroke="#e86a6a" stroke-width="1.1"/>
<path d="M85.4 220L154.2 187" stroke="#6ad86a" stroke-width="1.1"/>
<rect x="104.3" y="205.3" width="6" height="6" fill="#212830" stroke="#f0f0f0" stroke-width="1.2"/>
<!-- vp window ctrls -->
<rect x="1846.5" y="191" width="13.5" height="3.6" fill="#e8e8e8"/>
<path d="M1872.5 187.5h9v8h-9z M1875.5 184.5h9v8" fill="none" stroke="#e8e8e8" stroke-width="1.8"/>
<path d="M1897.5 184.5l12 10M1909.5 184.5l-12 10" stroke="#f0f0f0" stroke-width="2.4"/>
<!-- ViewCube compass -->
<defs><radialGradient id="ring" cx="0.5" cy="0.5" r="0.5"><stop offset="0.55" stop-color="#262c35"/><stop offset="0.72" stop-color="#2b313a"/><stop offset="0.76" stop-color="#444b56"/><stop offset="1" stop-color="#454c57"/></radialGradient>
<linearGradient id="vcF" x1="0" y1="0" x2="0" y2="1"><stop offset="0" stop-color="#c4c4c4"/><stop offset="1" stop-color="#a8a8a8"/></linearGradient>
<linearGradient id="vcR" x1="0" y1="0" x2="0" y2="1"><stop offset="0" stop-color="#bdbdbd"/><stop offset="1" stop-color="#a2a2a2"/></linearGradient></defs>
<defs><radialGradient id="inner" cx="0.5" cy="0.45" r="0.5"><stop offset="0" stop-color="#1a1f26"/><stop offset="0.6" stop-color="#1d2229"/><stop offset="1" stop-color="#262b33"/></radialGradient></defs>
<ellipse cx="1830" cy="326.5" rx="70.5" ry="33" fill="#454c57"/>
<ellipse cx="1830" cy="325" rx="55.5" ry="23" fill="url(#inner)"/>
<g font-family="Liberation Sans" font-weight="bold" fill="#b4b9c0" stroke="#b4b9c0" stroke-width="0.9" text-anchor="middle">
<text transform="translate(1784.5 304) rotate(-22) scale(1.25 0.75)" font-size="13">W</text>
<text transform="translate(1867 302) rotate(22) scale(1.2 0.75)" font-size="13">N</text>
<text transform="translate(1781 351) rotate(14) scale(1.45 0.8)" font-size="16">S</text>
<text transform="translate(1884 348) rotate(-24) scale(1.5 0.78)" font-size="16">E</text>
</g>
<polygon points="1793,269 1829,256 1867,267.5 1832.4,282" fill="#b4b5b8"/>
<polygon points="1793,269 1832.4,282 1832.4,332 1794,316" fill="url(#vcF)"/>
<polygon points="1832.4,282 1867,267.5 1865.6,314 1832.4,332" fill="url(#vcR)"/>
<path d="M1793 269L1832.4 282L1867 267.5" stroke="#4a4f56" stroke-width="0.8" stroke-dasharray="4 3" fill="none"/>
<path d="M1832.4 282V332" stroke="#4a4f56" stroke-width="0.8" fill="none"/>
<ellipse cx="1832" cy="284" rx="6" ry="5" fill="#b8bec8" opacity="0.6"/>
<g font-family="Liberation Sans" font-weight="bold" fill="#5c6269" stroke="#5c6269" stroke-width="0.5" text-anchor="middle">
<text transform="translate(1812.5 304.5) rotate(17) scale(0.72 1.1)" font-size="12">FRONT</text>
<text transform="translate(1850 303.5) rotate(-20) scale(0.68 1.1)" font-size="12">RIGHT</text>
<text transform="translate(1830 270) rotate(195) scale(1 0.6)" font-size="8" fill="#6a7078">TOP</text>
</g>
<!-- WCS -->
<rect x="1801.5" y="388" width="56" height="20" rx="5.5" fill="#9ca1ab" stroke="#80858e" stroke-width="1"/>
<text x="1806" y="402.3" font-family="Liberation Sans" font-size="12.5" fill="#595d64">WCS</text>
<path d="M1842.5 394.5h10l-5 5.5z" fill="#b4b8be" stroke="#7c8189" stroke-width="0.7"/>
<!-- nav bar -->
<rect x="1877.5" y="438" width="40" height="258" rx="4" fill="#5a5f67" fill-opacity="0.94" stroke="#63686f" stroke-width="1"/>
<circle cx="1910.5" cy="444" r="3.2" fill="none" stroke="#3a4049" stroke-width="1"/>
<g fill="none" stroke="#44494f" stroke-width="1.6">
<path d="M1884 473a13.5 13.5 0 1 0 27 0v-13h-13.5a13.5 13.5 0 0 0-13.5 13z"/>
<circle cx="1897.5" cy="473" r="8"/>
<path d="M1892 479l-5 6M1903 479l5 6"/>
<path d="M1882 533c3 6 9 9 16 9s10-5 11-12l1-10c0-3-3-3-3 0l-1 5v-9c0-3-3-3-3 0v8l-1-11c0-3-3-3-3 0v10l-1-9c0-3-3-3-3 0v11l-3-4c-2-2-5 0-3 2z"/>
<path d="M1882 547l18 18M1882 547v6M1882 547h6M1902 547l-18 18M1902 547v6M1902 547h-6M1882 565v-6M1882 565h6"/>
<circle cx="1904" cy="566" r="5.5"/><path d="M1908 570l5 4"/>
<path d="M1897 593l-4 5h2.5v18h3v-18h2.5z"/>
<ellipse cx="1897" cy="609" rx="13" ry="4.5"/>
<rect x="1882" y="645" width="7" height="6"/><rect x="1891.5" y="645" width="7" height="6"/><rect x="1901" y="645" width="7" height="6"/>
<rect x="1883" y="656" width="20" height="17"/><path d="M1889 659v11l9-5.5z" fill="#3a4049"/>
<circle cx="1910.5" cy="690" r="3.2"/>
</g>
<g fill="#44494f"><path d="M1894 496h6l-3 3z"/><path d="M1894 584h6l-3 3z"/><path d="M1894 630h6l-3 3z"/></g>
<path d="M1880 508h35M1880 580h35" stroke="#4f545b" stroke-width="1"/>
<!-- UCS icon -->
<rect x="798.3" y="638" width="6.8" height="57" rx="2" fill="#4a7fbe"/><rect x="802" y="640" width="2" height="53" fill="#6e9ed4"/>
<path d="M798.3 639l3.4-3 3.4 3z" fill="#6aa0dc"/>
<path d="M799 619h16.5L799 634.5h16" fill="none" stroke="#3a8cf0" stroke-width="1.1"/>
<path d="M805 690L843 675.5" stroke="#3f8a44" stroke-width="4.8" stroke-linecap="round"/>
<path d="M839.5 655l7 7.5 7-7.5M846.5 662.5v7.5" fill="none" stroke="#36c036" stroke-width="1.1"/>
<path d="M800.5 695L846.5 710.5" stroke="#d47474" stroke-width="5.2" stroke-linecap="round"/>
<path d="M844 691l15 15M859 691l-15 15" stroke="#e83030" stroke-width="1.1"/>
</svg>
<!-- command line -->
<div class="a" style="left:305px;top:863px;width:76.5px;height:19px;background:#505459;border-radius:2px"></div>
<div class="a" style="left:305px;top:888.5px;width:76.5px;height:18px;background:#505459;border-radius:2px"></div>
<div class="t" style="left:307px;top:866.8px;font-family:'Liberation Mono',monospace;font-size:14.5px;color:#d4d4d4">Command:</div>
<div class="t" style="left:307px;top:891.3px;font-family:'Liberation Mono',monospace;font-size:14.5px;color:#e0e0e0">Command:</div>
<div class="a" style="left:226px;top:911px;width:72px;height:33px;background:#262d37;border-radius:3px 0 0 3px"></div>
<div class="a" style="left:298px;top:912px;width:1394px;height:32px;background:#c6c7c9;border-radius:0 3px 3px 0;opacity:0.97"></div>
<svg class="a" style="left:226px;top:911px" width="1466" height="33" viewBox="226 911 1466 33">
<g fill="#d0d0d0"><rect x="231.5" y="916.5" width="2" height="2"/><rect x="235" y="916.5" width="2" height="2"/><rect x="231.5" y="920.5" width="2" height="2"/><rect x="235" y="920.5" width="2" height="2"/><rect x="231.5" y="924.5" width="2" height="2"/><rect x="235" y="924.5" width="2" height="2"/><rect x="231.5" y="928.5" width="2" height="2"/><rect x="235" y="928.5" width="2" height="2"/><rect x="231.5" y="932.5" width="2" height="2"/><rect x="235" y="932.5" width="2" height="2"/><rect x="231.5" y="936" width="2" height="2"/><rect x="235" y="936" width="2" height="2"/></g>
<path d="M245.5 920.5l11 11M256.5 920.5l-11 11" stroke="#d8d8d8" stroke-width="2.2"/>
<path d="M273.5 935l10-10" stroke="#9a9a9a" stroke-width="3" stroke-linecap="round"/><path d="M282 926.5a5 5 0 0 1 8.5-7.5l-3.5 3.5l1.5 1.5l3.5-3.5a5 5 0 0 1-7.5 8.5z" fill="#9a9a9a"/>
<rect x="303" y="920" width="20" height="15" fill="#c4c5c7" stroke="#6a6a6a" stroke-width="1.3"/><rect x="303" y="920" width="20" height="3" fill="#6a6a6a"/><path d="M305.5 926l3 2-3 2M309 931.5h4" fill="none" stroke="#666" stroke-width="0.9"/>
<path d="M325.5 925.5h9l-4.5 5z" fill="#555"/>
<path d="M1677 931l5-5 5 5z" fill="#555"/>
</svg>
<div class="t" style="left:344px;top:921.5px;font-family:'Liberation Mono',monospace;font-style:italic;font-size:15px;color:#6e6e6e;word-spacing:1px">Type a command</div>
<div id="stripe2" class="a"></div>
<div id="ltabs" class="a">
<div class="a" style="left:9px;top:0;width:86px;height:30px;background:#3b4453;clip-path:polygon(13.5% 0,100% 0,86.5% 100%,0 100%)"></div>
<div class="t" style="transform:scaleX(0.9346);transform-origin:0 0;left:30px;top:8.11px;font-size:16.05px;font-weight:bold;color:#f2f2f2">Model</div>
<div class="t" style="transform:scaleX(0.9346);transform-origin:0 0;left:104px;top:8.11px;font-size:16.05px;color:#e2e2e2;letter-spacing:-0.3px">Layout1</div>
<div class="t" style="transform:scaleX(0.9346);transform-origin:0 0;left:186px;top:8.11px;font-size:16.05px;color:#e2e2e2;letter-spacing:-0.3px">Layout2</div>
<svg class="a" style="left:0;top:0" width="320" height="37" viewBox="0 951 320 37">
<path d="M167 975.5L175 956.5M249 975.5L256.5 956.5M299 975.5L306.5 956.5" stroke="#4a5362" stroke-width="1.2"/>
<path d="M277.8 958v15.5M270 965.8h15.8" stroke="#ececec" stroke-width="2.2"/>
</svg>
</div>
<div id="status" class="a">
<div class="a" style="left:1px;top:0;width:1173px;height:27px;background:#3b4453"></div>
<div class="a" style="left:1179px;top:0;width:59px;height:27px;background:#3b4453"></div>
<div class="a" style="left:1242px;top:0;width:79px;height:27px;background:#3b4453"></div>
<div class="a" style="left:1324px;top:0;width:30px;height:27px;background:#3b4453"></div>
<div class="a" style="left:1355px;top:0;width:130px;height:27px;background:#3b4453"></div>
<div class="a" style="left:1486px;top:0;width:80px;height:27px;background:#3b4453"></div>
<div class="a" style="left:1570px;top:0;width:131px;height:27px;background:#3b4453"></div>
<div class="a" style="left:1704px;top:0;width:50px;height:27px;background:#3b4453"></div>
<div class="a" style="left:1755px;top:0;width:30px;height:27px;background:#3b4453"></div>
<div class="a" style="left:1788px;top:0;width:31px;height:27px;background:#3b4453"></div>
<div class="a" style="left:1822px;top:0;width:34px;height:27px;background:#3b4453"></div>
<div class="a" style="left:1859px;top:0;width:60px;height:27px;background:#3b4453"></div>
<div class="a" style="left:1242px;top:1px;width:28px;height:26px;background:#5b89c1"></div>
<div class="a" style="left:1517px;top:1px;width:28px;height:26px;background:#5b89c1"></div>
<div class="a" style="left:1570px;top:1px;width:28px;height:26px;background:#5b89c1"></div>
<div class="t" style="transform:scaleX(0.9346);transform-origin:0 0;left:1183.5px;top:7.61px;font-size:16.05px;color:#ececec;letter-spacing:-0.6px">MODEL</div>
<div class="t" style="transform:scaleX(0.9346);transform-origin:0 0;left:1665px;top:7.61px;font-size:16.05px;color:#ececec;letter-spacing:-1.3px">1:1</div>
<svg class="a" style="left:1170px;top:0" width="749" height="27" viewBox="1170 988 749 27">
<g stroke="#fff" stroke-width="1.6"><path d="M1250.2 992.8v19.1M1255.4 992.8v19.1M1260.6 992.8v19.1M1246 997.5h19M1246 1002.2h19M1246 1006.9h19"/></g>
<g fill="#e0e0e0"><rect x="1278" y="995" width="3" height="3"/><rect x="1284" y="995" width="3" height="3"/><rect x="1290" y="995" width="3" height="3"/><rect x="1278" y="1001" width="3" height="3"/><rect x="1284" y="1001" width="3" height="3"/><rect x="1290" y="1001" width="3" height="3"/><rect x="1278" y="1007" width="3" height="3"/><rect x="1284" y="1007" width="3" height="3"/><rect x="1290" y="1007" width="3" height="3"/></g>
<g fill="#e0e0e0"><path d="M1306 1000.1h9.8l-4.9 4.7z"/><path d="M1419.9 1000h9.9l-4.95 4.8z"/><path d="M1469.9 1000h9.9l-4.95 4.8z"/><path d="M1550.6 1000h9.9l-4.95 4.8z"/><path d="M1686 1000h9.8l-4.9 4.8z"/><path d="M1739 1000h9.4l-4.7 4.8z"/></g>
<path d="M1333.5 995v9.3M1329 999.6h9" stroke="#d8d8d8" stroke-width="1.3"/><rect x="1336.5" y="1005.5" width="12.5" height="4.5" fill="#e6e6e6" stroke="#aaa" stroke-width="0.6"/>
<path d="M1360.8 993.3v19.3h19M1360.8 1006.7h6v5.9" fill="none" stroke="#d8d8d8" stroke-width="1.2"/>
<circle cx="1398" cy="1003" r="7.8" fill="none" stroke="#d4d4d4" stroke-width="1.2"/><path d="M1397.5 1003l9.4-8.6M1397.5 1003h12.5" stroke="#d4d4d4" stroke-width="1.2"/>
<path d="M1450.4 992.8v18.2" stroke="#4cd04c" stroke-width="1.2"/><path d="M1442.3 994.4l15.1 15.4" stroke="#d04c4c" stroke-width="1.2"/><rect x="1448.5" y="1000.2" width="3.6" height="3.6" fill="#3b4453" stroke="#e0e0e0" stroke-width="0.9"/>
<path d="M1491 1009.5l14.8-14.4" stroke="#d0d0d0" stroke-width="1.2"/><path d="M1491 1009.5h19.8" stroke="#a8a8a8" stroke-width="2"/><rect x="1496.5" y="1001.2" width="3.6" height="3.6" fill="#e0e0e0"/>
<rect x="1523" y="995" width="17.7" height="17.6" fill="none" stroke="#fff" stroke-width="1.4"/><rect x="1521" y="993.3" width="5.7" height="5.5" fill="#5b89c1" stroke="#fff" stroke-width="1.2"/>
<path d="M1582.5 993.3l4 11 4.5 8.6-6.5-4-2 -2.5-2 2.5-6.5 4 4.5-8.6z" fill="#fff"/><circle cx="1590" cy="997.3" r="3.4" fill="none" stroke="#fff" stroke-width="1"/>
<path d="M1612.5 993.5l4 11 4.5 8.4-6.5-4-2-2.5-2 2.5-6.5 4 4.5-8.4z" fill="#d8d8d8"/><path d="M1620 994l-3 4.5h3l-2.5 4" fill="none" stroke="#d8d8d8" stroke-width="1.2"/>
<path d="M1643.2 993.3l4 11 4.9 8.6-6.9-4-2-2.5-2 2.5-6.9 4 4.9-8.6z" fill="#d8d8d8"/>
<g transform="translate(1719 1002.7)"><path d="M-1.8 -9.8h3.6l0.6 2.6 2.4 1 2.3-1.4 2.5 2.5-1.4 2.3 1 2.4 2.6 0.6v3.6l-2.6 0.6-1 2.4 1.4 2.3-2.5 2.5-2.3-1.4-2.4 1-0.6 2.6h-3.6l-0.6-2.6-2.4-1-2.3 1.4-2.5-2.5 1.4-2.3-1-2.4-2.6-0.6v-3.6l2.6-0.6 1-2.4-1.4-2.3 2.5-2.5 2.3 1.4 2.4-1z" fill="#d8d8d8"/><circle r="3.6" fill="#3b4453"/></g>
<path d="M1769.5 992.8v19.5M1759.8 1002.5h19.4" stroke="#e0e0e0" stroke-width="2.6"/>
<rect x="1793" y="993.3" width="7.8" height="7.8" fill="none" stroke="#e0e0e0" stroke-width="1"/><circle cx="1808.4" cy="1001.7" r="4.5" fill="none" stroke="#e0e0e0" stroke-width="1"/><path d="M1800.5 1004.8l4.8 8h-9.6z" fill="none" stroke="#e0e0e0" stroke-width="1"/>
<path d="M1826 989.7h14l6 5.5v11.7h-20z" fill="#3a74c0"/><path d="M1840 989.7l6 5.5h-6z" fill="#8ab0e0"/><path d="M1831.3 990v15M1826 995.4h14" stroke="#e8f0ff" stroke-width="1.2"/><circle cx="1831.3" cy="995.4" r="1.5" fill="#3a74c0" stroke="#fff" stroke-width="0.8"/>
<rect x="1826" y="1004.3" width="10.5" height="7.7" fill="#f0b428"/>
<path d="M1836 1008.4l4.9 5.5 9.4-9.6" fill="none" stroke="#3cb550" stroke-width="2.4"/>
<rect x="1864.5" y="995.5" width="19" height="14" fill="none" stroke="#d8d8d8" stroke-width="1"/><path d="M1874.5 1001.5l5-4.5M1876 997h3.5v3.5M1868.5 1007.5l4.5-4M1867.5 1003.5v4h4" fill="none" stroke="#d8d8d8" stroke-width="1.1"/>
<path d="M1894 995h19.8M1894 1002.3h19.8M1894 1009.8h19.8" stroke="#e6e6e6" stroke-width="2.2"/>
</svg>
</div>
</body></html>
